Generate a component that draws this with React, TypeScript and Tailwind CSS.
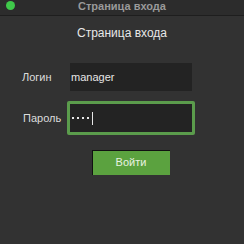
export default function App() {
  return (
    <div className="w-[244px] h-[244px] bg-[#323232] flex flex-col text-[11px] font-['Liberation_Sans',Arial,sans-serif]">
      {/* title bar */}
      <div className="relative h-[16px] bg-[#2c2c2c] border-b border-[#1e1e1e]">
        <span className="absolute left-[6px] top-[1px] w-[9px] h-[9px] rounded-full bg-[#3fc94a]" />
        <div className="text-center text-[#9a9a9a] font-bold leading-[12px]">Страница входа</div>
      </div>

      <div className="pt-[10px] text-center text-[#e8e8e8] text-[12px] leading-[14px]">Страница входа</div>

      <div className="mt-[23px] flex flex-col gap-[10px]">
        <div className="flex items-center">
          <span className="w-[70px] pl-[22px] text-[#dcdcdc]">Логин</span>
          <div className="w-[122px] h-[28px] bg-[#232323] flex items-center pl-[1px] text-[#e6e6e6]">manager</div>
        </div>
        <div className="flex items-center">
          <span className="w-[67px] pl-[23px] text-[#dcdcdc]">Пароль</span>
          <div className="w-[128px] h-[34px] rounded-[2px] border-[3px] border-[#5b9c4c] bg-[#232323] flex items-center pl-[2px] gap-[1px] text-[#e6e6e6]">
            <span className="w-[2px] h-[2px] bg-[#e6e6e6] mr-[2px]" />
            <span className="w-[2px] h-[2px] bg-[#e6e6e6] mr-[2px]" />
            <span className="w-[2px] h-[2px] bg-[#e6e6e6] mr-[2px]" />
            <span className="w-[2px] h-[2px] bg-[#e6e6e6] mr-[2px]" />
            <span className="w-[1px] h-[13px] bg-[#e6e6e6]" />
          </div>
        </div>
      </div>

      <div className="mt-[15px] flex justify-start pl-[92px]">
        <button className="w-[78px] h-[25px] bg-[#5ba23f] text-[#e8f2e0] text-[11px] shadow-[inset_1px_1px_0_#111]">Войти</button>
      </div>
    </div>
  );
}
